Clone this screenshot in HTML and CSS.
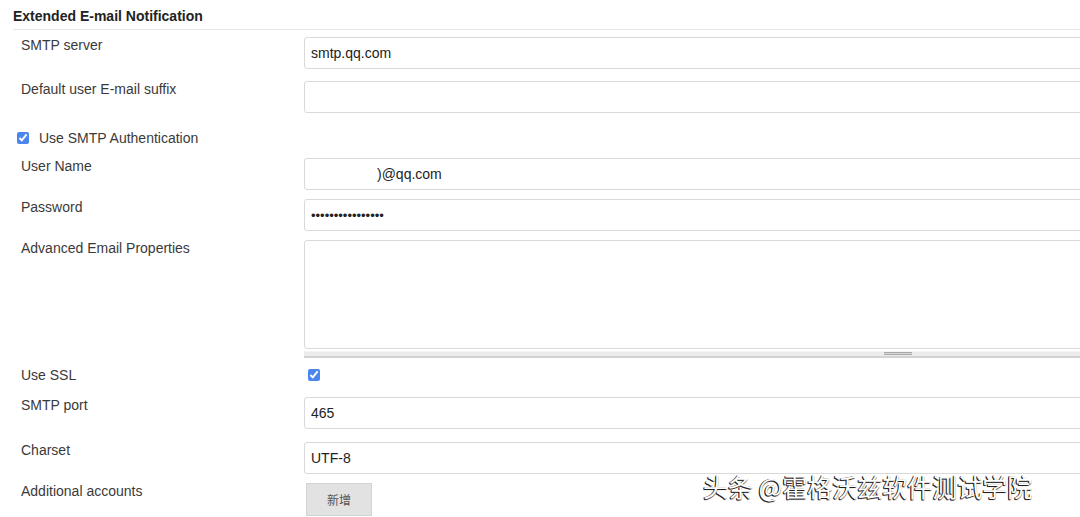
FILE: index.html
```html
<!DOCTYPE html>
<html lang="en">
<head>
    <meta charset="UTF-8">
    <meta name="viewport" content="width=device-width, initial-scale=1.0">
    <title>Extended E-mail Notification</title>
    <link rel="stylesheet" href="styles.css">
</head>
<body>
    <div class="section">
        <div class="section-header">Extended E-mail Notification</div>

        <div class="row row-first">
            <label class="label">SMTP server</label>
            <div class="field"><input class="text-input" type="text" value="smtp.qq.com"></div>
        </div>

        <div class="row">
            <label class="label">Default user E-mail suffix</label>
            <div class="field"><input class="text-input" type="text" value=""></div>
        </div>

        <div class="check-row">
            <input class="checkbox" type="checkbox" checked>
            <span class="check-label">Use SMTP Authentication</span>
        </div>

        <div class="row">
            <label class="label">User Name</label>
            <div class="field"><input class="text-input masked-user" type="text" value=")@qq.com"></div>
        </div>

        <div class="row row-tight">
            <label class="label">Password</label>
            <div class="field"><input class="text-input password" type="password" value="0123456789abcdef"></div>
        </div>

        <div class="row row-tight">
            <label class="label">Advanced Email Properties</label>
            <div class="field">
                <textarea class="text-area"></textarea>
                <!-- drag handle under the textarea -->
                <div class="textarea-handle"><span class="grip"></span></div>
            </div>
        </div>

        <div class="row row-ssl">
            <label class="label">Use SSL</label>
            <div class="field field-check"><input class="checkbox" type="checkbox" checked></div>
        </div>

        <div class="row row-wide">
            <label class="label">SMTP port</label>
            <div class="field"><input class="text-input" type="text" value="465"></div>
        </div>

        <div class="row row-wide">
            <label class="label">Charset</label>
            <div class="field"><input class="text-input" type="text" value="UTF-8"></div>
        </div>

        <div class="row row-tight">
            <label class="label">Additional accounts</label>
            <div class="field"><button class="add-button" type="button">新增</button></div>
        </div>
    </div>

    <div class="watermark">头条 @霍格沃兹软件测试学院</div>
</body>
</html>
```

FILE: styles.css
```css
/* General Styling */
html, body {
    margin: 0;
    padding: 0;
    overflow: hidden;
}

body {
    font-family: 'Liberation Sans', Arial, sans-serif;
    font-size: 14px;
    color: #333;
    background-color: #fff;
    width: 1080px;
    height: 517px;
    position: relative;
}

.section {
    width: 1500px;
    padding-left: 13px;
}

.section-header {
    font-weight: bold;
    line-height: 16px;
    padding-top: 8px;
    padding-bottom: 5px;
    border-bottom: 1px solid #e6e6e6;
    color: #222;
}

/* Form rows: label column + field column */
.row {
    display: grid;
    grid-template-columns: 283px 1188px;
    padding-left: 8px;
    margin-top: 12px;
}

.row-first {
    margin-top: 7px;
}

.row-tight {
    margin-top: 9px;
}

.row-wide {
    margin-top: 13px;
}

.row-ssl {
    margin-top: 9px;
}

.label {
    line-height: 17px;
    color: #3a3a3a;
}

.field {
    display: flex;
    flex-direction: column;
}

.field-check {
    height: 16px;
    justify-content: center;
    padding-left: 4px;
}

.text-input {
    box-sizing: border-box;
    height: 32px;
    border: 1px solid #d9d9d9;
    border-radius: 3px;
    padding: 0 6px;
    font-family: 'Liberation Sans', Arial, sans-serif;
    font-size: 14px;
    color: #222;
    background: #fff;
    outline: none;
}

.masked-user {
    text-indent: 66px;
}

.password {
    font-size: 13px;
}

.text-area {
    box-sizing: border-box;
    height: 109px;
    border: 1px solid #d9d9d9;
    border-radius: 3px;
    resize: none;
    outline: none;
    margin: 0;
}

.textarea-handle {
    height: 4px;
    margin-top: 2px;
    background-color: #ececec;
    border-top: 1px solid #f4f4f4;
    border-bottom: 2px solid #d2d2d2;
    position: relative;
}

.grip {
    position: absolute;
    left: 580px;
    top: 0;
    width: 28px;
    height: 1px;
    border-top: 1px solid #a8a8a8;
    border-bottom: 1px solid #a8a8a8;
    background: #d8d8d8;
}

/* Checkbox rows */
.check-row {
    display: flex;
    align-items: center;
    height: 16px;
    margin-top: 17px;
    padding-left: 4px;
}

.checkbox {
    width: 12px;
    height: 12px;
    margin: 0;
    accent-color: #4a86ee;
}

.check-label {
    margin-left: 10px;
    line-height: 16px;
    color: #3a3a3a;
}

.add-button {
    width: 66px;
    height: 33px;
    margin-left: 2px;
    background-color: #e2e2e2;
    border: 1px solid #d4d4d4;
    border-radius: 0;
    font-family: 'Noto Sans CJK SC', sans-serif;
    font-size: 12px;
    color: #555;
    cursor: pointer;
}

/* Watermark over the lower right corner */
.watermark {
    position: absolute;
    left: 703px;
    top: 470px;
    font-family: 'Noto Sans CJK SC', sans-serif;
    font-size: 25px;
    line-height: 32px;
    color: #fff;
    white-space: nowrap;
    text-shadow: -1px 1px 0 #222, -1px 0 0 #444, 0 1px 1px rgba(0, 0, 0, 0.6);
}
```
